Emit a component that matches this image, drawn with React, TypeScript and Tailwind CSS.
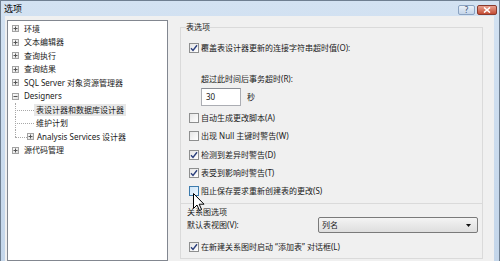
import React from "react";

function PlusBox({ minus = false }: { minus?: boolean }) {
  return (
    <svg width="7" height="7" viewBox="0 0 7 7" className="shrink-0">
      <defs>
        <linearGradient id="pb" x1="0" y1="0" x2="1" y2="1">
          <stop offset="0" stopColor="#ffffff" />
          <stop offset="1" stopColor="#dcdcdc" />
        </linearGradient>
      </defs>
      <rect x="0.5" y="0.5" width="6" height="6" fill="url(#pb)" stroke="#a3a3a3" />
      <line x1="1.5" y1="3.5" x2="5.5" y2="3.5" stroke="#555" />
      {!minus && <line x1="3.5" y1="1.5" x2="3.5" y2="5.5" stroke="#555" />}
    </svg>
  );
}

function Check({ checked = false, hover = false }: { checked?: boolean; hover?: boolean }) {
  return (
    <span
      className={`w-[10px] h-[10px] shrink-0 border flex items-center justify-center ${
        hover
          ? "border-[#3d7bad] bg-gradient-to-br from-[#cde4f7] to-[#eef6fd]"
          : "border-[#8e8f8f] bg-gradient-to-br from-[#e6e6e6] to-white"
      }`}
    >
      {checked && (
        <svg width="8" height="8" viewBox="0 0 8 8">
          <path d="M1 4.2 L3 6.4 L7 1.2" fill="none" stroke="#2b3f7c" strokeWidth="1.4" />
        </svg>
      )}
    </span>
  );
}

function CheckRow({ label, checked, hover, className = "" }: { label: string; checked?: boolean; hover?: boolean; className?: string }) {
  return (
    <div className={`flex items-center h-[12px] gap-[2px] pl-[8px] ${className}`}>
      <Check checked={checked} hover={hover} />
      <span className="whitespace-nowrap">{label}</span>
    </div>
  );
}

function TreeRoot({ label, minus }: { label: string; minus?: boolean }) {
  return (
    <div className="flex items-center h-[13.5px] pl-[4px] gap-[5px]">
      <PlusBox minus={minus} />
      <span className="whitespace-nowrap">{label}</span>
    </div>
  );
}

function Connector({ width, last = false }: { width: string; last?: boolean }) {
  return (
    <span className={`relative self-stretch shrink-0 ${width}`}>
      <span className={`absolute left-0 top-0 border-l border-dotted border-[#a8a8a8] ${last ? "h-1/2" : "h-full"}`} />
      <span className="absolute left-0 top-1/2 w-full border-t border-dotted border-[#a8a8a8]" />
    </span>
  );
}

export default function App() {
  return (
    <div className="relative w-[500px] h-[261px] overflow-hidden flex flex-col bg-gradient-to-b from-[#d3e2f2] to-[#c4d6ea] border-x border-t border-[#6f7f91] font-['Noto_Sans','Noto_Sans_CJK_SC',sans-serif] text-[8px] text-[#1a1a1a]">
      {/* title bar */}
      <div className="h-[15px] shrink-0 flex items-center justify-between pl-[3px] pr-[2px]">
        <span className="text-[9px] text-black">选项</span>
        <div className="flex items-center gap-[2px] pt-[2px]">
          <div className="w-[17px] h-[10px] rounded-[2px] border border-[#8aa2c1] bg-gradient-to-b from-[#eaf1f9] to-[#c3d4e9] flex items-center justify-center text-[8px] leading-none text-[#3a4e6e]">
            ?
          </div>
          <div className="w-[20px] h-[10px] rounded-[2px] border border-[#8a3b2e] bg-gradient-to-b from-[#e8a08f] to-[#c34a33] flex items-center justify-center">
            <svg width="8" height="6" viewBox="0 0 8 6">
              <path d="M1 0.5 L7 5.5 M7 0.5 L1 5.5" stroke="#ffffff" strokeWidth="1.6" />
            </svg>
          </div>
        </div>
      </div>

      {/* body */}
      <div className="flex-1 flex ml-[4px] mr-[5px] bg-[#f0f0f0] pt-[4px] pl-[2px]">
        {/* tree */}
        <div className="w-[161px] shrink-0 bg-white border border-[#828790] pt-[1px]">
          <TreeRoot label="环境" />
          <TreeRoot label="文本编辑器" />
          <TreeRoot label="查询执行" />
          <TreeRoot label="查询结果" />
          <TreeRoot label="SQL Server 对象资源管理器" />
          <TreeRoot label="Designers" minus />
          <div className="flex items-center h-[13.5px] pl-[7px]">
            <Connector width="w-[19px]" />
            <span className="bg-[#e8e8e8] px-[2px] h-[12px] flex items-center whitespace-nowrap">表设计器和数据库设计器</span>
          </div>
          <div className="flex items-center h-[13.5px] pl-[7px]">
            <Connector width="w-[19px]" />
            <span className="px-[2px] whitespace-nowrap">维护计划</span>
          </div>
          <div className="flex items-center h-[13.5px] pl-[7px]">
            <Connector width="w-[12px]" last />
            <PlusBox />
            <span className="pl-[3px] whitespace-nowrap">Analysis Services 设计器</span>
          </div>
          <TreeRoot label="源代码管理" />
        </div>

        {/* options */}
        <div className="flex-1 pl-[12px] pr-[11px] pt-[1px]">
          <fieldset className="border border-[#dadada] pb-[6px]">
            <legend className="ml-[5px] h-[12px] leading-[12px]">表选项</legend>
            <CheckRow className="mt-[9px]" label="覆盖表设计器更新的连接字符串超时值(O):" checked />
            <div className="mt-[19px] h-[12px] flex items-center pl-[20px] whitespace-nowrap">超过此时间后事务超时(R):</div>
            <div className="mt-[3px] flex items-center pl-[20px] gap-[6px]">
              <div className="w-[40px] h-[18px] bg-white border border-[#abadb3] border-t-[#8a8d94] flex items-center pl-[4px]">30</div>
              <span>秒</span>
            </div>
            <CheckRow className="mt-[6px]" label="自动生成更改脚本(A)" />
            <CheckRow className="mt-[6px]" label="出现 Null 主键时警告(W)" />
            <CheckRow className="mt-[7px]" label="检测到差异时警告(D)" checked />
            <CheckRow className="mt-[6px]" label="表受到影响时警告(T)" checked />
            <CheckRow className="mt-[6px]" label="阻止保存要求重新创建表的更改(S)" hover />
          </fieldset>
          <div className="border-x border-b border-[#dadada] pt-[3px] pb-[5px]">
            <div className="h-[10px] leading-[10px] pl-[6px]">关系图选项</div>
            <div className="h-[16px] flex items-center pl-[6px] pr-[4px]">
              <span className="whitespace-nowrap">默认表视图(V):</span>
              <div className="ml-auto w-[160px] h-[16px] rounded-[2px] border border-[#7a7a7a] bg-gradient-to-b from-[#f4f4f4] to-[#dedede] flex items-center justify-between pl-[3px] pr-[6px]">
                <span>列名</span>
                <svg width="5" height="3" viewBox="0 0 5 3">
                  <path d="M0 0 L5 0 L2.5 3 Z" fill="#111" />
                </svg>
              </div>
            </div>
            <CheckRow className="mt-[8px]" label="在新建关系图时启动 “添加表” 对话框(L)" checked />
          </div>
        </div>
      </div>

      {/* mouse pointer */}
      <svg className="absolute left-[192px] top-[192px]" width="12" height="19" viewBox="0 0 12 19">
        <path d="M0.5 0.5 L0.5 15.5 L4 12 L6.5 17.5 L8.6 16.6 L6.2 11.2 L11 11.2 Z" fill="#fff" stroke="#000" strokeWidth="1" />
      </svg>
    </div>
  );
}
